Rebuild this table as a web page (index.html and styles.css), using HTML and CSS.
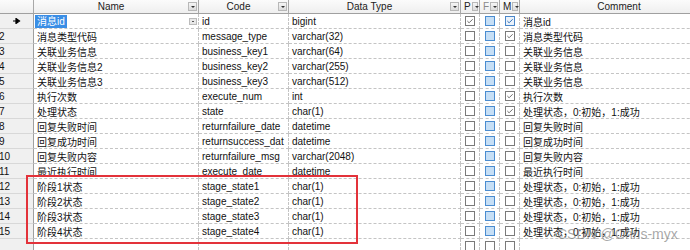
FILE: index.html
```html
<!DOCTYPE html>
<html lang="zh-CN">
<head>
  <meta charset="UTF-8">
  <title>Columns</title>
  <link rel="stylesheet" href="styles.css">
</head>
<body>
  <div class="sheet">
    <div class="row head">
      <div class="cell rn"></div>
      <div class="cell hd"><span class="hd-text">Name</span><span class="drop"></span></div>
      <div class="cell hd"><span class="hd-text">Code</span><span class="drop"></span></div>
      <div class="cell hd"><span class="hd-text">Data Type</span><span class="drop"></span></div>
      <div class="cell hd small"><span>P</span><span class="drop"></span></div>
      <div class="cell hd small dim"><span>F</span><span class="drop"></span></div>
      <div class="cell hd small"><span>M</span><span class="drop"></span></div>
      <div class="cell hd plain"><span class="hd-text">Comment</span></div>
    </div>

    <div class="row">
      <div class="cell rn current"><svg width="8" height="6" viewBox="0 0 8 6"><path d="M0 3h5M3 0.5L6.5 3L3 5.5z" stroke="#000" stroke-width="1.2" fill="#000"/></svg></div>
      <div class="cell name-edit"><span class="sel">消息id</span><span class="mini"></span></div>
      <div class="cell">id</div>
      <div class="cell">bigint</div>
      <div class="cell box"><span class="cb on"><svg viewBox="0 0 9 9"><path d="M1.5 4.5L3.5 6.5L7.5 2.5"/></svg></span></div>
      <div class="cell box"><span class="cb fk"></span></div>
      <div class="cell box"><span class="cb on focus"><svg viewBox="0 0 9 9"><path d="M1.5 4.5L3.5 6.5L7.5 2.5"/></svg></span></div>
      <div class="cell">消息id</div>
    </div>

    <div class="row">
      <div class="cell rn">2</div>
      <div class="cell">消息类型代码</div>
      <div class="cell">message_type</div>
      <div class="cell">varchar(32)</div>
      <div class="cell box"><span class="cb"></span></div>
      <div class="cell box"><span class="cb fk"></span></div>
      <div class="cell box"><span class="cb on"><svg viewBox="0 0 9 9"><path d="M1.5 4.5L3.5 6.5L7.5 2.5"/></svg></span></div>
      <div class="cell">消息类型代码</div>
    </div>

    <div class="row">
      <div class="cell rn">3</div>
      <div class="cell">关联业务信息</div>
      <div class="cell">business_key1</div>
      <div class="cell">varchar(64)</div>
      <div class="cell box"><span class="cb"></span></div>
      <div class="cell box"><span class="cb fk"></span></div>
      <div class="cell box"><span class="cb"></span></div>
      <div class="cell">关联业务信息</div>
    </div>

    <div class="row">
      <div class="cell rn">4</div>
      <div class="cell">关联业务信息2</div>
      <div class="cell">business_key2</div>
      <div class="cell">varchar(255)</div>
      <div class="cell box"><span class="cb"></span></div>
      <div class="cell box"><span class="cb fk"></span></div>
      <div class="cell box"><span class="cb"></span></div>
      <div class="cell">关联业务信息</div>
    </div>

    <div class="row">
      <div class="cell rn">5</div>
      <div class="cell">关联业务信息3</div>
      <div class="cell">business_key3</div>
      <div class="cell">varchar(512)</div>
      <div class="cell box"><span class="cb"></span></div>
      <div class="cell box"><span class="cb fk"></span></div>
      <div class="cell box"><span class="cb"></span></div>
      <div class="cell">关联业务信息</div>
    </div>

    <div class="row">
      <div class="cell rn">6</div>
      <div class="cell">执行次数</div>
      <div class="cell">execute_num</div>
      <div class="cell">int</div>
      <div class="cell box"><span class="cb"></span></div>
      <div class="cell box"><span class="cb fk"></span></div>
      <div class="cell box"><span class="cb on"><svg viewBox="0 0 9 9"><path d="M1.5 4.5L3.5 6.5L7.5 2.5"/></svg></span></div>
      <div class="cell">执行次数</div>
    </div>

    <div class="row">
      <div class="cell rn">7</div>
      <div class="cell">处理状态</div>
      <div class="cell">state</div>
      <div class="cell">char(1)</div>
      <div class="cell box"><span class="cb"></span></div>
      <div class="cell box"><span class="cb fk"></span></div>
      <div class="cell box"><span class="cb on"><svg viewBox="0 0 9 9"><path d="M1.5 4.5L3.5 6.5L7.5 2.5"/></svg></span></div>
      <div class="cell">处理状态，0:初始，1:成功</div>
    </div>

    <div class="row">
      <div class="cell rn">8</div>
      <div class="cell">回复失败时间</div>
      <div class="cell">returnfailure_date</div>
      <div class="cell">datetime</div>
      <div class="cell box"><span class="cb"></span></div>
      <div class="cell box"><span class="cb fk"></span></div>
      <div class="cell box"><span class="cb"></span></div>
      <div class="cell">回复失败时间</div>
    </div>

    <div class="row">
      <div class="cell rn">9</div>
      <div class="cell">回复成功时间</div>
      <div class="cell">returnsuccess_dat</div>
      <div class="cell">datetime</div>
      <div class="cell box"><span class="cb"></span></div>
      <div class="cell box"><span class="cb fk"></span></div>
      <div class="cell box"><span class="cb"></span></div>
      <div class="cell">回复成功时间</div>
    </div>

    <div class="row">
      <div class="cell rn">10</div>
      <div class="cell">回复失败内容</div>
      <div class="cell">returnfailure_msg</div>
      <div class="cell">varchar(2048)</div>
      <div class="cell box"><span class="cb"></span></div>
      <div class="cell box"><span class="cb fk"></span></div>
      <div class="cell box"><span class="cb"></span></div>
      <div class="cell">回复失败内容</div>
    </div>

    <div class="row">
      <div class="cell rn">11</div>
      <div class="cell">最近执行时间</div>
      <div class="cell">execute_date</div>
      <div class="cell">datetime</div>
      <div class="cell box"><span class="cb"></span></div>
      <div class="cell box"><span class="cb fk"></span></div>
      <div class="cell box"><span class="cb"></span></div>
      <div class="cell">最近执行时间</div>
    </div>

    <div class="row">
      <div class="cell rn">12</div>
      <div class="cell">阶段1状态</div>
      <div class="cell">stage_state1</div>
      <div class="cell">char(1)</div>
      <div class="cell box"><span class="cb"></span></div>
      <div class="cell box"><span class="cb fk"></span></div>
      <div class="cell box"><span class="cb"></span></div>
      <div class="cell">处理状态，0:初始，1:成功</div>
    </div>

    <div class="row">
      <div class="cell rn">13</div>
      <div class="cell">阶段2状态</div>
      <div class="cell">stage_state2</div>
      <div class="cell">char(1)</div>
      <div class="cell box"><span class="cb"></span></div>
      <div class="cell box"><span class="cb fk"></span></div>
      <div class="cell box"><span class="cb"></span></div>
      <div class="cell">处理状态，0:初始，1:成功</div>
    </div>

    <div class="row">
      <div class="cell rn">14</div>
      <div class="cell">阶段3状态</div>
      <div class="cell">stage_state3</div>
      <div class="cell">char(1)</div>
      <div class="cell box"><span class="cb"></span></div>
      <div class="cell box"><span class="cb fk"></span></div>
      <div class="cell box"><span class="cb"></span></div>
      <div class="cell">处理状态，0:初始，1:成功</div>
    </div>

    <div class="row">
      <div class="cell rn">15</div>
      <div class="cell">阶段4状态</div>
      <div class="cell">stage_state4</div>
      <div class="cell">char(1)</div>
      <div class="cell box"><span class="cb"></span></div>
      <div class="cell box"><span class="cb fk"></span></div>
      <div class="cell box"><span class="cb"></span></div>
      <div class="cell">处理状态，0:初始，1:成功</div>
    </div>

    <div class="row">
      <div class="cell rn"></div>
      <div class="cell"></div>
      <div class="cell"></div>
      <div class="cell"></div>
      <div class="cell box"><span class="cb"></span></div>
      <div class="cell box"><span class="cb"></span></div>
      <div class="cell box"><span class="cb"></span></div>
      <div class="cell"></div>
    </div>

    <div class="mark-box"></div>
    <div class="watermark">CSDN @Chris-myx</div>
  </div>
</body>
</html>
```

FILE: styles.css
```css
* {
  margin: 0;
  padding: 0;
  box-sizing: border-box;
}

body {
  font-family: 'Liberation Sans', 'Noto Sans CJK SC', sans-serif;
  font-size: 10px;
  color: #111;
  background-color: #fff;
  overflow: hidden;
}

.sheet {
  position: relative;
  width: 690px;
  height: 250px;
  overflow: hidden;
}

/* Rows and cells */
.row {
  display: grid;
  grid-template-columns: 34px 165px 90px 172px 19px 20px 20px 200px;
  width: 720px;
  height: 15px;
}

.cell {
  display: flex;
  align-items: center;
  padding-left: 3px;
  white-space: nowrap;
  overflow: hidden;
  border-right: 1px dashed #c4c4c4;
  border-bottom: 1px dashed #c4c4c4;
}

.rn {
  padding-left: 0;
  text-indent: -1px;
  background-color: #f0f0f0;
  border-right: 1px solid #a0a0a0;
  border-bottom: 1px solid #d8d8d8;
}

.rn.current {
  justify-content: center;
  padding-left: 0;
}

/* Header */
.row.head {
  height: 14px;
}

.head .cell {
  background: linear-gradient(#fbfbfb, #efefef);
  border-right: 1px solid #a8a8a8;
  border-bottom: 1px solid #a0a0a0;
  color: #222;
}

.hd {
  display: grid;
  grid-template-columns: 1fr 9px;
  padding: 0 1px 0 0;
}

.hd-text {
  text-align: center;
}

.hd.plain {
  grid-template-columns: 1fr;
}

.hd.small {
  display: flex;
  gap: 1px;
  padding-left: 3px;
}

.hd.dim span:first-child {
  color: #8a8a8a;
}

.drop {
  width: 9px;
  height: 9px;
  border: 1px solid #b8b8b8;
  background: linear-gradient(#f6f6f6, #dcdcdc);
  position: relative;
}

.drop::after {
  content: '';
  position: absolute;
  left: 2px;
  top: 3px;
  border-left: 2px solid transparent;
  border-right: 2px solid transparent;
  border-top: 2px solid #333;
}

/* Editing cell */
.name-edit {
  justify-content: space-between;
  padding-left: 1px;
  padding-right: 1px;
}

.sel {
  background-color: #3a8ee6;
  color: #fff;
  padding: 0 2px 0 2px;
  line-height: 13px;
}

.mini {
  width: 8px;
  height: 7px;
  border: 1px solid #bcbcbc;
  background: #e8e8e8;
  position: relative;
}

.mini::after {
  content: '';
  position: absolute;
  left: 2px;
  top: 2px;
  width: 2px;
  height: 1px;
  background: #555;
}

/* Checkboxes */
.box {
  justify-content: center;
  padding-left: 0;
}

.cb {
  width: 10px;
  height: 10px;
  border: 1px solid #7a7a7a;
  background-color: #fff;
  display: block;
}

.cb svg {
  display: block;
  width: 8px;
  height: 8px;
  fill: none;
  stroke: #6a6a6a;
  stroke-width: 1.1;
}

.cb.fk {
  border-color: #4a8cd0;
  background-color: #c6dff6;
}

.cb.focus {
  border-color: #4a86c8;
  background-color: #eaf2fb;
}

.cb.focus svg {
  stroke: #2e6db4;
}

/* Overlays */
.mark-box {
  position: absolute;
  left: 26px;
  top: 175px;
  width: 332px;
  height: 69px;
  border: 2px solid #e3323a;
}

.watermark {
  position: absolute;
  left: 557px;
  top: 226px;
  font-size: 14px;
  color: rgba(110, 110, 110, 0.6);
  white-space: nowrap;
}
```
